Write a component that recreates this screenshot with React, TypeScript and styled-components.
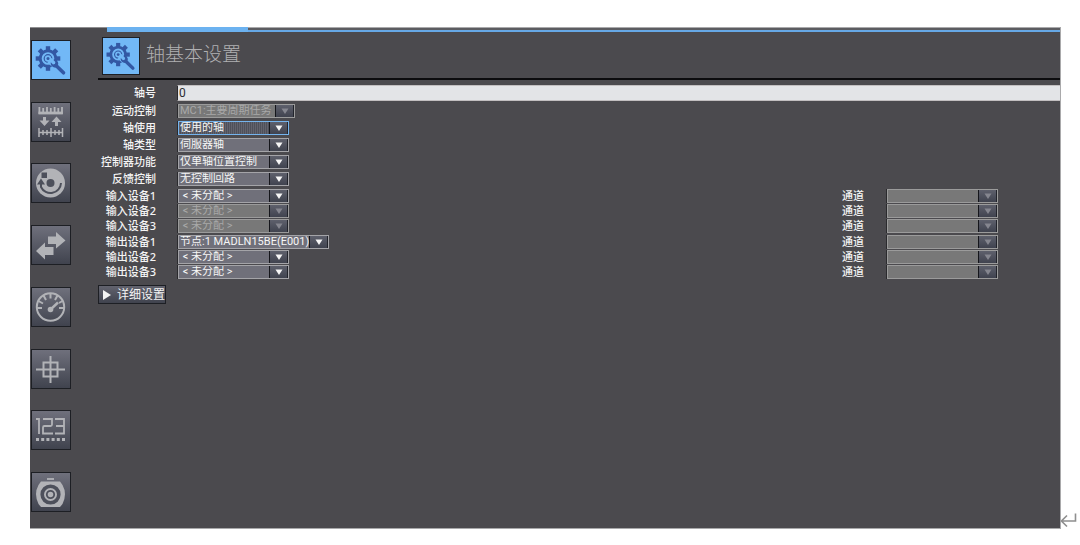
import React from 'react';
import styled, { createGlobalStyle, css } from 'styled-components';

const GlobalStyle = createGlobalStyle`
  * { box-sizing: border-box; }
  body {
    margin: 0;
    background: #fff;
    font-family: "Noto Sans", "Noto Sans CJK SC", sans-serif;
  }
`;

const Page = styled.div`
  display: flex;
  align-items: flex-end;
  min-height: 100vh;
  padding: 27px 2px 16px 30px;
`;

const Window = styled.main`
  flex: 1;
  min-width: 0;
  align-self: stretch;
  display: flex;
  flex-direction: column;
  background: #4b4a4e;
  border-right: 1px solid #a9a9ab;
  border-bottom: 1px solid #a9a9ab;
`;

const TabStrip = styled.div`
  display: flex;
  height: 5px;
`;

const TabGap = styled.div`
  width: 77px;
  border-top: 1px solid #8e8e90;
`;

const ActiveTab = styled.div`
  width: 141px;
  background: #6cb2f0;
`;

const TabRest = styled.div`
  flex: 1;
  background: #5c5c60;
  border-top: 1px solid #a9a9ab;
  border-bottom: 2px solid #66a8e6;
`;

const Body = styled.div`
  flex: 1;
  display: flex;
`;

const Sidebar = styled.nav`
  display: flex;
  flex-direction: column;
  justify-content: space-between;
  width: 68px;
  padding: 8px 0 16px 1px;
`;

const tile = css<{ $active?: boolean }>`
  display: block;
  padding: 0;
  border: 1px solid #1d1f24;
  background: ${p => (p.$active ? '#72b8f6' : 'linear-gradient(#6f707c, #40434e)')};
  color: ${p => (p.$active ? '#3358a4' : '#b2b3b7')};
  svg { display: block; width: 100%; height: 100%; }
`;

const SideButton = styled.button<{ $active?: boolean }>`
  ${tile}
  width: 40px;
  height: 40px;
`;

const HeaderIcon = styled.span<{ $active?: boolean }>`
  ${tile}
  width: 38px;
  height: 38px;
`;

const Content = styled.section`
  flex: 1;
  min-width: 0;
`;

const Header = styled.header`
  display: flex;
  gap: 6px;
  height: 48px;
  padding: 5px 0 0 4px;
  border-bottom: 2px solid #0c0c0e;
`;

const Title = styled.h1`
  margin: 0;
  font-size: 19px;
  line-height: 34px;
  font-weight: 300;
  color: #b0b0b2;
`;

const Form = styled.form`
  display: flex;
  flex-direction: column;
  gap: 3px;
  padding-top: 5px;
`;

const Group = styled.div<{ $gap: number }>`
  display: flex;
  flex-direction: column;
  gap: ${p => p.$gap}px;
`;

const Row = styled.div`
  display: flex;
  align-items: center;
`;

const Label = styled.label`
  width: 58px;
  margin-right: 21px;
  text-align: right;
  font-size: 11px;
  line-height: 14px;
  font-weight: 500;
  white-space: nowrap;
  color: #f4f4f4;
`;

const ChannelCell = styled.div`
  display: flex;
  align-items: center;
  width: 218px;
  margin-left: auto;
`;

const ChannelLabel = styled(Label)`
  width: 23px;
  text-align: left;
`;

const NumberInput = styled.input`
  flex: 1;
  min-width: 0;
  height: 16px;
  padding: 0 1px;
  border: 1px solid #c2bfc0;
  border-left-color: #2a2a2d;
  border-right: 0;
  border-radius: 0;
  outline: 0;
  background: #e3e4e7;
  color: #2c2c30;
  font: 12px/14px Roboto, sans-serif;
`;

const SelectFrame = styled.span<{ $width: number }>`
  position: relative;
  display: block;
  width: ${p => p.$width}px;
  height: 14px;
  border-left: 1px solid #2a2a2d;
`;

const Select = styled.select<{ $focus?: boolean }>`
  appearance: none;
  display: block;
  width: 100%;
  height: 14px;
  padding: 0 18px 0 1px;
  border: 1px solid ${p => (p.$focus ? '#74b4ee' : '#a4a4a8')};
  border-radius: 0;
  outline: 0;
  background: ${p => (p.$focus
    ? 'repeating-linear-gradient(90deg, #62636d 0 1px, #4e505a 1px 2px)'
    : '#70707a')};
  color: #f6f6f6;
  font: 11px/12px Roboto, "Noto Sans CJK SC", sans-serif;
  opacity: 1;
  &:disabled {
    background: #787878;
    border-color: #9b9b9b;
    color: #a8a8a8;
  }
`;

const Arrow = styled.span<{ $off?: boolean }>`
  position: absolute;
  top: 1px;
  right: 1px;
  display: flex;
  align-items: center;
  justify-content: center;
  width: 19px;
  height: 12px;
  border-left: 1px solid #15161b;
  border-right: 1px solid #22242b;
  background: linear-gradient(#5e606c, #40434f);
  color: ${p => (p.$off ? '#85868f' : '#f6f6f6')};
  pointer-events: none;
`;

const DetailButton = styled.button`
  display: flex;
  align-items: center;
  gap: 6px;
  width: 68px;
  height: 19px;
  margin-top: 6px;
  padding: 0 0 0 4px;
  border: 1px solid #1d1f24;
  background: linear-gradient(#62636e, #40434e);
  color: #f4f4f4;
  font: 12px/16px "Noto Sans", "Noto Sans CJK SC", sans-serif;
  white-space: nowrap;
`;

const ReturnMark = styled.svg`
  flex: none;
  width: 17px;
  height: 16px;
`;

const toothAngles = [0, 45, 90, 135, 180, 225, 270, 315];

const GearIcon = () => (
  <svg viewBox="0 0 38 38" aria-hidden="true">
    <g fill="currentColor">
      {toothAngles.map(a => (
        <path key={a} d="M13.800 9.500V5.200H18.200V9.500Z" transform={`rotate(${a} 16 17.500)`} />
      ))}
    </g>
    <circle cx="16" cy="17.500" r="7.800" fill="none" stroke="currentColor" strokeWidth="3" />
    <circle cx="16" cy="17.500" r="3.800" fill="none" stroke="currentColor" strokeWidth="1.200" />
    <circle cx="16" cy="17.500" r="1.500" fill="currentColor" />
    <path d="M17.500 19 29 30" stroke="#72b8f6" strokeWidth="6.500" />
    <path d="M24 24.500 31.500 31.800" stroke="currentColor" strokeWidth="3.600" strokeLinecap="round" />
    <path d="M18.800 21.200 21 23.400 22.900 22.900 23.400 21 21.200 18.800C24 18.200 26.600 20 26.200 23.300L24 26.400C20.600 26.800 18.200 24.200 18.800 21.200Z" fill="currentColor" />
  </svg>
);

const UnitIcon = () => (
  <svg viewBox="0 0 38 38" fill="none" stroke="currentColor" aria-hidden="true">
    <path d="M6.500 10H30.800" strokeWidth="2.800" />
    <path d="M7.400 4V11M11.200 5V11M15 4V11M18.800 5V11M22.600 4V11M26.300 5V11M30 4V11" strokeWidth="1.800" />
    <path d="M12.500 14V18M24.500 18V23" strokeWidth="3" />
    <path d="M7.500 17.500H17.500L12.500 23ZM19.500 19H29.500L24.500 13.500Z" fill="currentColor" stroke="none" />
    <path d="M7 29.500H30.500M7 25V34M11 27V32M15 27V32M19 25V34M23 27V32M27 27V32M30.500 25V34" strokeWidth="1.500" />
  </svg>
);

const RotateIcon = () => (
  <svg viewBox="0 0 38 38" aria-hidden="true">
    <circle cx="18.500" cy="19" r="14.500" fill="currentColor" />
    <circle cx="18.500" cy="19" r="4" fill="#4d505b" />
    <path d="M29 19A10.500 10.500 0 0 1 9 23V19" fill="none" stroke="#4d505b" strokeWidth="2" />
    <path d="M5 20.500 9 14.500 13 20.500ZM9.500 8.500H15V14H9.500Z" fill="#4d505b" />
  </svg>
);

const SwapIcon = () => (
  <svg viewBox="0 0 38 38" fill="currentColor" aria-hidden="true">
    <path d="M16 10.500H24V6L33.500 14.500 24 22.500V18H16Z" />
    <path d="M21.500 21H13V16.500L4 25 13 33.500V29H21.500Z" />
  </svg>
);

const GaugeIcon = () => (
  <svg viewBox="0 0 38 38" fill="none" stroke="currentColor" strokeWidth="2" aria-hidden="true">
    <circle cx="18.500" cy="19" r="13.700" />
    <path d="M18.500 5V10.500M11.500 7.500 14 12M6.500 13 11 15.500M5 20H10M25.500 7.500 23 12M30.500 13 27 15M32 20H27" />
    <path d="M18.500 21.500 26 14.500" strokeWidth="2.400" />
    <circle cx="18.500" cy="21.500" r="2.800" fill="currentColor" stroke="none" />
  </svg>
);

const HomeIcon = () => (
  <svg viewBox="0 0 38 38" fill="none" stroke="currentColor" strokeWidth="2" aria-hidden="true">
    <path d="M4 19.500H33M18.500 6V33M11.500 12.500H25.500V26.500H11.500Z" />
  </svg>
);

const CounterIcon = () => (
  <svg viewBox="0 0 38 38" fill="none" stroke="currentColor" strokeWidth="1.800" aria-hidden="true">
    <path d="M4 8H7V23M11 8H20V13.500Q20 15 18.500 15H12.500Q11 15 11 16.500V22.500H21M23 8H32V22.500H23M24 15H32" />
    <path d="M4 28.500H33" strokeWidth="3" strokeDasharray="3 2.200" />
  </svg>
);

const ServoIcon = () => (
  <svg viewBox="0 0 38 38" aria-hidden="true">
    <path d="M15 6H22" stroke="currentColor" strokeWidth="1.800" />
    <path d="M9 8.500H28L30.500 12Q35.500 21 30.500 31L28 34H9L6.500 31Q1.500 21 6.500 12Z" fill="currentColor" />
    <circle cx="18.500" cy="21.500" r="8.300" fill="none" stroke="#4d505b" strokeWidth="3.600" />
    <circle cx="18.500" cy="21.500" r="3.700" fill="none" stroke="#4d505b" strokeWidth="1.800" />
  </svg>
);

const sections = [
  { name: '轴基本设置', Icon: GearIcon },
  { name: '单位换算', Icon: UnitIcon },
  { name: '操作设置', Icon: RotateIcon },
  { name: '其它操作', Icon: SwapIcon },
  { name: '限位设置', Icon: GaugeIcon },
  { name: '原点返回', Icon: HomeIcon },
  { name: '位置计数', Icon: CounterIcon },
  { name: '伺服设置', Icon: ServoIcon },
];

interface DropDownProps {
  id: string;
  value: string;
  width?: number;
  disabled?: boolean;
  focus?: boolean;
}

const DropDown = ({ id, value, width = 112, disabled, focus }: DropDownProps) => (
  <SelectFrame $width={width}>
    <Select id={id} disabled={disabled} $focus={focus}>
      <option>{value}</option>
    </Select>
    <Arrow $off={disabled}>
      <svg width="8" height="6" viewBox="0 0 8 6" aria-hidden="true">
        <path d="M0.500 0.500H7.500L4 6Z" fill="currentColor" />
      </svg>
    </Arrow>
  </SelectFrame>
);

const settings = [
  { id: 'motion', label: '运动控制', value: 'MC1:主要周期任务', width: 118, disabled: true },
  { id: 'use', label: '轴使用', value: '使用的轴', focus: true },
  { id: 'type', label: '轴类型', value: '伺服器轴' },
  { id: 'function', label: '控制器功能', value: '仅单轴位置控制' },
  { id: 'feedback', label: '反馈控制', value: '无控制回路' },
];

const none = '\u00a0< 未分配 >';

const devices = [
  [
    { id: 'in1', label: '输入设备1', value: none },
    { id: 'in2', label: '输入设备2', value: none, disabled: true },
    { id: 'in3', label: '输入设备3', value: none, disabled: true },
  ],
  [
    { id: 'out1', label: '输出设备1', value: '节点:1 MADLN15BE(E001)', width: 152 },
    { id: 'out2', label: '输出设备2', value: none },
    { id: 'out3', label: '输出设备3', value: none },
  ],
];

export default function App() {
  return (
    <>
      <GlobalStyle />
      <Page>
        <Window>
          <TabStrip>
            <TabGap />
            <ActiveTab />
            <TabRest />
          </TabStrip>
          <Body>
            <Sidebar>
              {sections.map(({ name, Icon }, i) => (
                <SideButton key={name} type="button" aria-label={name} $active={i === 0}>
                  <Icon />
                </SideButton>
              ))}
            </Sidebar>
            <Content>
              <Header>
                <HeaderIcon $active><GearIcon /></HeaderIcon>
                <Title>轴基本设置</Title>
              </Header>
              <Form>
                <Row>
                  <Label htmlFor="axis">轴号</Label>
                  <NumberInput id="axis" defaultValue="0" />
                </Row>
                <Group $gap={3}>
                  {settings.map(({ label, ...field }) => (
                    <Row key={field.id}>
                      <Label htmlFor={field.id}>{label}</Label>
                      <DropDown {...field} />
                    </Row>
                  ))}
                </Group>
                <Group $gap={2}>
                  {devices.map((group, i) => (
                    <Group key={i} $gap={1}>
                      {group.map(({ label, ...field }) => (
                        <Row key={field.id}>
                          <Label htmlFor={field.id}>{label}</Label>
                          <DropDown {...field} />
                          <ChannelCell>
                            <ChannelLabel htmlFor={`${field.id}-channel`}>通道</ChannelLabel>
                            <DropDown id={`${field.id}-channel`} value="" disabled />
                          </ChannelCell>
                        </Row>
                      ))}
                    </Group>
                  ))}
                </Group>
              </Form>
              <DetailButton type="button">
                <svg width="8" height="10" viewBox="0 0 8 10" aria-hidden="true">
                  <path d="M0 0 8 5 0 10Z" fill="currentColor" />
                </svg>
                详细设置
              </DetailButton>
            </Content>
          </Body>
        </Window>
        <ReturnMark viewBox="0 0 17 16" fill="none" stroke="#8f8f8f" strokeWidth="1.600" aria-hidden="true">
          <path d="M14.500 0.500V8H1M6 2.500 0.500 8 6 13.500" />
        </ReturnMark>
      </Page>
    </>
  );
}
